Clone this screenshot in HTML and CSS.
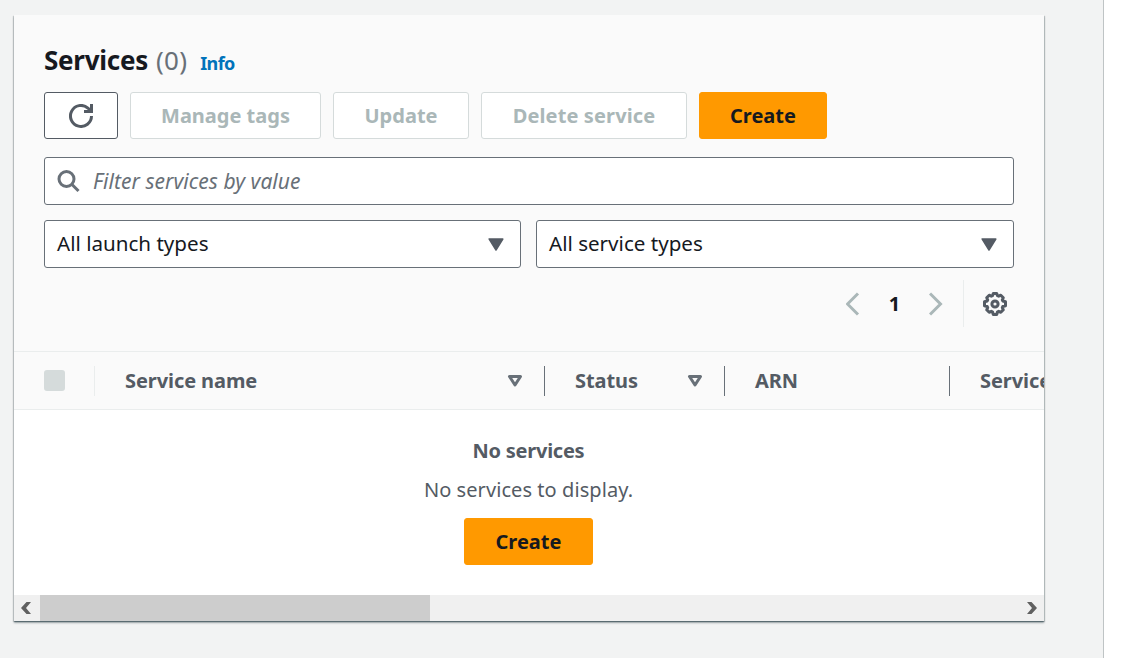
FILE: index.html
```html
<!DOCTYPE html>
<html lang="en">
<head>
<meta charset="utf-8">
<title>Services</title>
<link rel="stylesheet" href="styles.css">
</head>
<body>
<div class="page">
<main class="content">
<section class="card">
  <header class="card-header">
    <div class="heading"><h2><span class="title">Services</span><span class="count">(0)</span></h2><a class="info">Info</a></div>
    <div class="actions">
      <button class="btn btn-refresh" aria-label="Refresh"><svg width="24" height="24" viewBox="0 0 16 16" fill="none" stroke="currentColor" stroke-width="2"><path d="M15 8A7 7 0 1 1 12.600 2.700L14.500 4.600"/><path d="M15 0v5h-5"/></svg></button>
      <button class="btn btn-tags" disabled>Manage tags</button>
      <button class="btn btn-update" disabled>Update</button>
      <button class="btn btn-delete" disabled>Delete service</button>
      <button class="btn btn-primary">Create</button>
    </div>
    <div class="search">
      <svg width="24" height="24" viewBox="0 0 24 24" fill="none" stroke="#687078" stroke-width="3"><circle cx="9.500" cy="10" r="7.500"/><path d="M15 15.500l6.500 6.500"/></svg>
      <span class="placeholder">Filter services by value</span>
    </div>
    <div class="filters">
      <div class="select"><span>All launch types</span><svg width="16" height="13" viewBox="0 0 16 13"><path d="M1.200 1h13.600L8 12z" fill="#545b64" stroke="#545b64" stroke-width="1.500" stroke-linejoin="round"/></svg></div>
      <div class="select"><span>All service types</span><svg width="16" height="13" viewBox="0 0 16 13"><path d="M1.200 1h13.600L8 12z" fill="#545b64" stroke="#545b64" stroke-width="1.500" stroke-linejoin="round"/></svg></div>
    </div>
    <div class="tools">
      <svg class="prev" width="14" height="24" viewBox="0 0 14 24" fill="none" stroke="#aab7b8" stroke-width="3"><path d="M12 1.500L1.500 12 12 22.500"/></svg>
      <span class="page-number">1</span>
      <svg class="next" width="14" height="24" viewBox="0 0 14 24" fill="none" stroke="#aab7b8" stroke-width="3"><path d="M1 1.500L11.500 12 1 22.500"/></svg>
      <div class="preferences"><svg width="24" height="24" viewBox="0 0 24 24" fill="none" stroke="#545b64" stroke-width="3" stroke-linejoin="round"><path d="M10.300 1.500h3.400l.8 2.200 1.200.5 2.100-1 2.500 2.500-1 2.100.5 1.200 2.700.8v3.900l-2.700.8-.5 1.200 1 2.100-2.500 2.500-2.100-1-1.200.5-.8 2.700h-3.400l-.8-2.700-1.200-.5-2.100 1-2.500-2.500 1-2.100-.5-1.200-2.700-.8V9.800l2.700-.8.5-1.200-1-2.100 2.500-2.500 2.100 1 1.200-.5z"/><circle cx="12" cy="12" r="3.100"/></svg></div>
    </div>
  </header>
  <div class="table-head">
    <div class="cell cell-check"><span class="checkbox"></span></div>
    <div class="cell cell-name"><span>Service name</span><svg width="16" height="13" viewBox="0 0 16 13"><path d="M2.500 2.500h11L8 11z" fill="none" stroke="#687078" stroke-width="3" stroke-linejoin="round"/></svg></div>
    <div class="cell cell-status"><span>Status</span><svg width="16" height="13" viewBox="0 0 16 13"><path d="M2.500 2.500h11L8 11z" fill="none" stroke="#687078" stroke-width="3" stroke-linejoin="round"/></svg></div>
    <div class="cell cell-arn"><span>ARN</span></div>
    <div class="cell cell-type"><span>Service type</span></div>
  </div>
  <div class="empty">
    <strong>No services</strong>
    <p>No services to display.</p>
    <button class="btn btn-primary btn-empty">Create</button>
  </div>
  <div class="scrollbar">
    <svg width="26" height="26" viewBox="0 0 26 26"><path d="M12.500 7H17l-5 6 5 6h-4.500L7 13z" fill="#606060"/></svg>
    <span class="thumb"></span>
    <svg class="scroll-right" width="26" height="26" viewBox="0 0 26 26"><path d="M13.500 7H9l5 6-5 6h4.500L19 13z" fill="#606060"/></svg>
  </div>
</section>
</main>
</div>
</body>
</html>
```
FILE: styles.css
```css
* { box-sizing: border-box; }
body { margin: 0; background: #fff; color: #16191f; font: 20px/30px "Noto Sans", "Open Sans", sans-serif; }
.page { height: 658px; overflow: hidden; }
.content { width: 1104px; height: 658px; padding: 15px 0 0 14px; background: #f2f3f3; border-right: 1px solid #bfc4c5; }
.card { width: 1030px; height: 606px; background: #fff; box-shadow: 0 1px 1px rgba(0,28,36,.3), 1px 1px 1px rgba(0,28,36,.15), 0 2px 2px rgba(0,28,36,.3), -1px 1px 1px rgba(0,28,36,.12); }
.card-header { height: 337px; padding: 27px 30px 0; background: #fafafa; border-bottom: 1px solid #eaeded; }
.heading { display: flex; align-items: baseline; gap: 13px; height: 50px; }
h2 { margin: 0; font-size: 26px; line-height: 36px; display: flex; gap: 8px; }
.title { letter-spacing: -.25px; }
.count { font-weight: 400; color: #687078; letter-spacing: .2px; }
.info { color: #0073bb; font-size: 18px; font-weight: 700; letter-spacing: -.6px; }
.actions { display: flex; gap: 12px; }
.btn { display: flex; align-items: center; justify-content: center; height: 47px; padding: 0; background: #fff; color: #545b64; border: 1px solid #545b64; border-radius: 3px; font: 700 20px/30px "Noto Sans", "Open Sans", sans-serif; white-space: nowrap; }
.btn:disabled { color: #aab7b8; border-color: #d5dbdb; }
.btn-refresh { width: 74px; }
.btn-tags { width: 191px; }
.btn-update { width: 136px; }
.btn-delete { width: 206px; }
.btn-delete:disabled { letter-spacing: .12px; }
.btn-primary { width: 128px; background: #f90; border-color: #f90; color: #16191f; }
.search { display: flex; align-items: center; gap: 12px; height: 48px; margin-top: 18px; padding-left: 12px; background: #fff; border: 1px solid #687078; border-radius: 3px; }
.placeholder { font-size: 21px; font-style: italic; letter-spacing: .04px; color: #687078; }
.filters { display: grid; grid-template-columns: 477px 478px; gap: 15px; margin-top: 15px; }
.select { display: flex; align-items: center; justify-content: space-between; height: 48px; padding: 0 16px 0 12px; background: #fff; border: 1px solid #687078; border-radius: 3px; font-size: 20.6px; }
.select span { padding-bottom: 2px; }
.placeholder { padding-bottom: 1px; }
.tools { display: flex; align-items: center; justify-content: flex-end; height: 47px; margin-top: 12px; }
.page-number { width: 69px; text-align: center; font-weight: 700; }
.preferences { display: flex; align-items: center; height: 47px; margin-left: 20px; padding: 0 7px 0 19px; border-left: 1px solid #eaeded; }
.table-head { display: flex; align-items: center; height: 58px; overflow: hidden; background: #fafafa; border-bottom: 1px solid #eaeded; color: #545b64; font-weight: 700; letter-spacing: -.08px; white-space: nowrap; }
.cell { display: flex; flex: none; align-items: center; justify-content: space-between; height: 30px; padding: 0 21px 0 30px; border-right: 1px solid #687078; }
.cell-check { width: 81px; border-color: #eaeded; }
.checkbox { width: 21px; height: 21px; background: #d5dbdb; border-radius: 3px; }
.cell-name { width: 450px; }
.cell-status { width: 180px; }
.cell-arn { width: 225px; }
.cell-type { width: 225px; border: 0; }
.empty { display: flex; flex-direction: column; align-items: center; height: 185px; padding: 26px 1px 0 0; color: #545b64; }
.empty strong { letter-spacing: -.25px; }
.empty p { margin: 9px 0 13px; letter-spacing: .07px; }
.btn-empty { width: 129px; }
.scrollbar { display: flex; height: 26px; background: #f0f0f0; }
.thumb { width: 390px; background: #cdcdcd; }
.scroll-right { margin-left: auto; }
```
